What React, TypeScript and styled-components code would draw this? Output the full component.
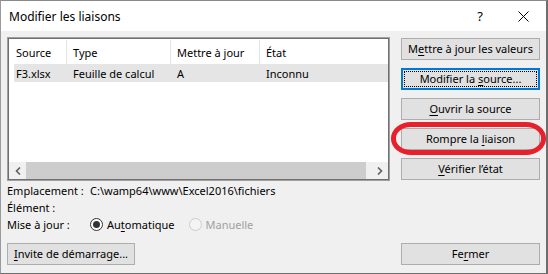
import React from "react";
import styled, { createGlobalStyle, css } from "styled-components";

const Global = createGlobalStyle`
  html, body { margin: 0; padding: 0; background: #f0f0f0; }
  body { font-family: "Noto Sans", "Open Sans", sans-serif; font-size: 11px; color: #000; }
  * { box-sizing: border-box; }
`;

const Dialog = styled.div`
  width: 548px;
  height: 274px;
  border-style: solid;
  border-color: #8a8a8a #6e6e6e #6e6e6e #9a9a9a;
  border-width: 1px 2px 1px 1px;
  background: #f0f0f0;
  display: flex;
  flex-direction: column;
`;

const TitleBar = styled.div`
  height: 30px;
  background: #fff;
  display: flex;
  align-items: center;
  padding-left: 8px;
  flex-shrink: 0;
`;

const Title = styled.div`
  font-size: 12px;
  color: #000;
  flex: 1;
`;

const Control = styled.div<{ $w: number }>`
  width: ${(p) => p.$w}px;
  height: 30px;
  display: flex;
  align-items: center;
  justify-content: center;
  font-size: 13px;
  color: #000;
`;

const Body = styled.div`
  flex: 1;
  display: flex;
  flex-direction: column;
  padding: 6px 6px 0 6px;
`;

const Top = styled.div`
  display: grid;
  grid-template-columns: 383px 139px;
  column-gap: 11px;
`;

const ListBox = styled.div`
  height: 144px;
  border: 1px solid #a0a0a0;
  box-shadow: inset 0 0 0 1px #6f6f6f;
  padding: 1px;
  background: #fff;
  display: flex;
  flex-direction: column;
`;

const ListContent = styled.div`
  flex: 1;
  padding: 1px 0 0 5px;
  display: flex;
  flex-direction: column;
`;

const Grid = styled.div<{ $header?: boolean }>`
  display: grid;
  grid-template-columns: 53px 104px 89px 1fr;
  height: ${(p) => (p.$header ? 24 : 18)}px;
  align-items: center;
  background: ${(p) => (p.$header ? "#fff" : "#e5e5e5")};
`;

const Cell = styled.div<{ $first?: boolean; $sep?: boolean }>`
  height: 100%;
  display: flex;
  align-items: center;
  padding-left: ${(p) => (p.$first ? 2 : 6)}px;
  white-space: nowrap;
  ${(p) =>
    p.$sep &&
    css`
      border-right: 1px solid #e5e5e5;
    `}
`;

const Spacer = styled.div`
  flex: 1;
`;

const ScrollBar = styled.div`
  height: 17px;
  display: flex;
  background: #f0f0f0;
`;

const ScrollArrow = styled.div`
  width: 17px;
  display: flex;
  align-items: center;
  justify-content: center;
`;

const Track = styled.div`
  flex: 1;
  display: flex;
`;

const Thumb = styled.div`
  flex: 1;
  margin-right: 5px;
  background: #cdcdcd;
`;

const ButtonCol = styled.div`
  display: flex;
  flex-direction: column;
  gap: 8px;
  padding-top: 1px;
`;

const Button = styled.div<{ $focus?: boolean; $w?: number }>`
  position: relative;
  height: 22px;
  ${(p) => p.$w && css`width: ${p.$w}px;`}
  border: 1px solid ${(p) => (p.$focus ? "#0078d7" : "#adadad")};
  ${(p) => p.$focus && css`box-shadow: inset 0 0 0 1px #0078d7;`}
  background: #e1e1e1;
  text-align: center;
  line-height: 20px;
  font-size: 11px;
  white-space: nowrap;
  ${(p) =>
    p.$focus &&
    css`
      &::after {
        content: "";
        position: absolute;
        inset: 2px;
        border: 1px dotted #000;
      }
    `}
`;

const Key = styled.span`
  text-decoration: underline;
  text-underline-offset: 2px;
`;

const Marked = styled.div`
  position: relative;
`;

const RedRing = styled.div`
  position: absolute;
  left: -10px;
  right: -6px;
  top: -6px;
  bottom: -5px;
  border: 5px solid #e8202b;
  border-radius: 20px / 16px;
  pointer-events: none;
`;

const Info = styled.div`
  margin-top: 1px;
  display: flex;
  flex-direction: column;
`;

const InfoRow = styled.div`
  height: 17px;
  display: flex;
  align-items: center;
`;

const Label = styled.div`
  width: 83px;
  flex-shrink: 0;
`;

const RadioItem = styled.label<{ $disabled?: boolean }>`
  display: flex;
  align-items: center;
  gap: 4px;
  margin-right: 14px;
  color: ${(p) => (p.$disabled ? "#a0a0a0" : "#000")};
`;

const RadioCircle = styled.span<{ $checked?: boolean; $disabled?: boolean }>`
  width: 13px;
  height: 13px;
  border-radius: 50%;
  border: 1px solid ${(p) => (p.$disabled ? "#cccccc" : "#333")};
  background: ${(p) => (p.$disabled ? "#f4f4f4" : "#fff")};
  display: flex;
  align-items: center;
  justify-content: center;
  &::after {
    content: "";
    width: 7px;
    height: 7px;
    border-radius: 50%;
    background: ${(p) => (p.$checked ? "#333" : "transparent")};
  }
`;

const Footer = styled.div`
  margin-top: 10px;
  display: flex;
  justify-content: space-between;
`;

const Chevron = ({ dir }: { dir: "l" | "r" }) => (
  <svg width="6" height="8" viewBox="0 0 6 8">
    <polyline
      points={dir === "l" ? "5,0.5 1.5,4 5,7.5" : "1,0.5 4.5,4 1,7.5"}
      fill="none"
      stroke="#606060"
      strokeWidth="1.6"
    />
  </svg>
);

export default function App() {
  return (
    <>
      <Global />
      <Dialog>
        <TitleBar>
          <Title>Modifier les liaisons</Title>
          <Control $w={40}>?</Control>
          <Control $w={46}>
            <svg width="11" height="11" viewBox="0 0 11 11">
              <path d="M0.5 0.5 L10.5 10.5 M10.5 0.5 L0.5 10.5" stroke="#000" strokeWidth="1" />
            </svg>
          </Control>
        </TitleBar>
        <Body>
          <Top>
            <ListBox>
              <ListContent>
                <Grid $header>
                  <Cell $first $sep>Source</Cell>
                  <Cell $sep>Type</Cell>
                  <Cell $sep>Mettre à jour</Cell>
                  <Cell>État</Cell>
                </Grid>
                <Grid>
                  <Cell $first>F3.xlsx</Cell>
                  <Cell>Feuille de calcul</Cell>
                  <Cell>A</Cell>
                  <Cell>Inconnu</Cell>
                </Grid>
                <Spacer />
              </ListContent>
              <ScrollBar>
                <ScrollArrow>
                  <Chevron dir="l" />
                </ScrollArrow>
                <Track>
                  <Thumb />
                </Track>
                <ScrollArrow>
                  <Chevron dir="r" />
                </ScrollArrow>
              </ScrollBar>
            </ListBox>
            <ButtonCol>
              <Button>
                M<Key>e</Key>ttre à jour les valeurs
              </Button>
              <Button $focus>
                Modifier la <Key>s</Key>ource...
              </Button>
              <Button>
                <Key>O</Key>uvrir la source
              </Button>
              <Marked>
                <Button>
                  Rompre la <Key>l</Key>iaison
                </Button>
                <RedRing />
              </Marked>
              <Button>
                <Key>V</Key>érifier l’état
              </Button>
            </ButtonCol>
          </Top>
          <Info>
            <InfoRow>
              <Label>Emplacement :</Label>
              <span>C:\wamp64\www\Excel2016\fichiers</span>
            </InfoRow>
            <InfoRow>
              <Label>Élément :</Label>
            </InfoRow>
            <InfoRow>
              <Label>Mise à jour :</Label>
              <RadioItem>
                <RadioCircle $checked />
                <span>
                  Au<Key>t</Key>omatique
                </span>
              </RadioItem>
              <RadioItem $disabled>
                <RadioCircle $disabled />
                <span>Manuelle</span>
              </RadioItem>
            </InfoRow>
          </Info>
          <Footer>
            <Button $w={128}>
              <Key>I</Key>nvite de démarrage...
            </Button>
            <Button $w={139}>
              Fe<Key>r</Key>mer
            </Button>
          </Footer>
        </Body>
      </Dialog>
    </>
  );
}
